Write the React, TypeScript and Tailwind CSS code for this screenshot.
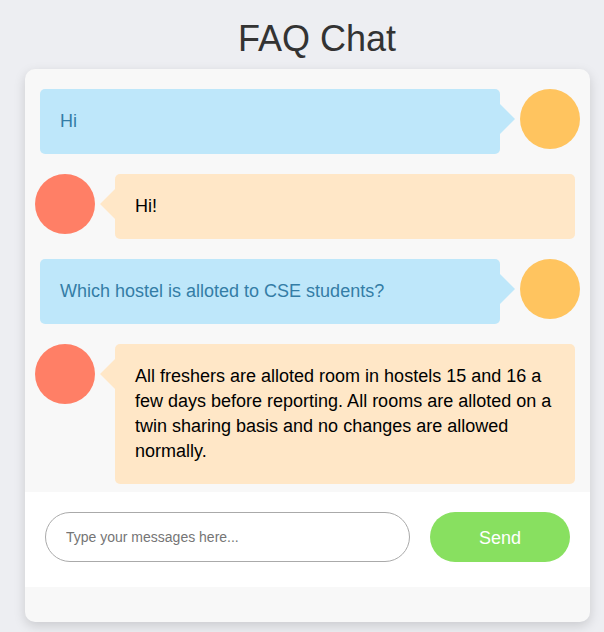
import React from "react";

type Msg = { from: "user" | "bot"; text: string };

const messages: Msg[] = [
  { from: "user", text: "Hi" },
  { from: "bot", text: "Hi!" },
  { from: "user", text: "Which hostel is alloted to CSE students?" },
  {
    from: "bot",
    text: "All freshers are alloted room in hostels 15 and 16 a few days before reporting. All rooms are alloted on a twin sharing basis and no changes are allowed normally.",
  },
];

function UserRow({ text }: { text: string }) {
  return (
    <div className="flex items-start pl-[15px] pr-[10px]">
      <div className="relative flex-1 rounded-[5px] bg-[#bee7fa] px-[20px] py-[20px] text-[18px] leading-[25px] text-[#347da6]">
        {text}
        <div className="absolute right-[-15px] top-[15px] h-0 w-0 border-y-[15px] border-l-[15px] border-y-transparent border-l-[#bee7fa]" />
      </div>
      <div className="ml-[20px] h-[60px] w-[60px] shrink-0 rounded-full bg-[#ffc45f]" />
    </div>
  );
}

function BotRow({ text }: { text: string }) {
  return (
    <div className="flex items-start pl-[10px] pr-[15px]">
      <div className="mr-[20px] h-[60px] w-[60px] shrink-0 rounded-full bg-[#ff7f66]" />
      <div className="relative flex-1 rounded-[5px] bg-[#ffe7c7] px-[20px] py-[20px] text-[18px] leading-[25px] text-black">
        {text}
        <div className="absolute left-[-15px] top-[15px] h-0 w-0 border-y-[15px] border-r-[15px] border-y-transparent border-r-[#ffe7c7]" />
      </div>
    </div>
  );
}

export default function App() {
  return (
    <div
      className="min-h-screen bg-[#edeef2] pb-[10px]"
      style={{ fontFamily: '"Liberation Sans", Arial, sans-serif' }}
    >
      <h1 className="pl-[30px] pt-[18px] text-center text-[36px] font-normal leading-[41px] text-[#333]">
        FAQ Chat
      </h1>
      <div className="ml-[25px] mt-[10px] w-[565px] overflow-hidden rounded-[10px] bg-[#f8f8f8] pb-[35px] shadow-[0_4px_12px_rgba(0,0,0,0.15)]">
        <div className="flex flex-col gap-[20px] pb-[8px] pt-[20px]">
          {messages.map((m, i) =>
            m.from === "user" ? <UserRow key={i} text={m.text} /> : <BotRow key={i} text={m.text} />
          )}
        </div>
        <div className="flex gap-[20px] bg-white px-[20px] pb-[25px] pt-[20px]">
          <input
            type="text"
            placeholder="Type your messages here..."
            className="h-[50px] w-[365px] rounded-full border border-[#aaa] bg-white px-[20px] text-[14px] text-black outline-none placeholder:text-[#757575]"
            style={{ fontFamily: '"Liberation Sans", Arial, sans-serif' }}
          />
          <button className="h-[50px] w-[140px] rounded-full bg-[#88e060] pt-[2px] text-[18px] text-white">
            Send
          </button>
        </div>
      </div>
    </div>
  );
}
